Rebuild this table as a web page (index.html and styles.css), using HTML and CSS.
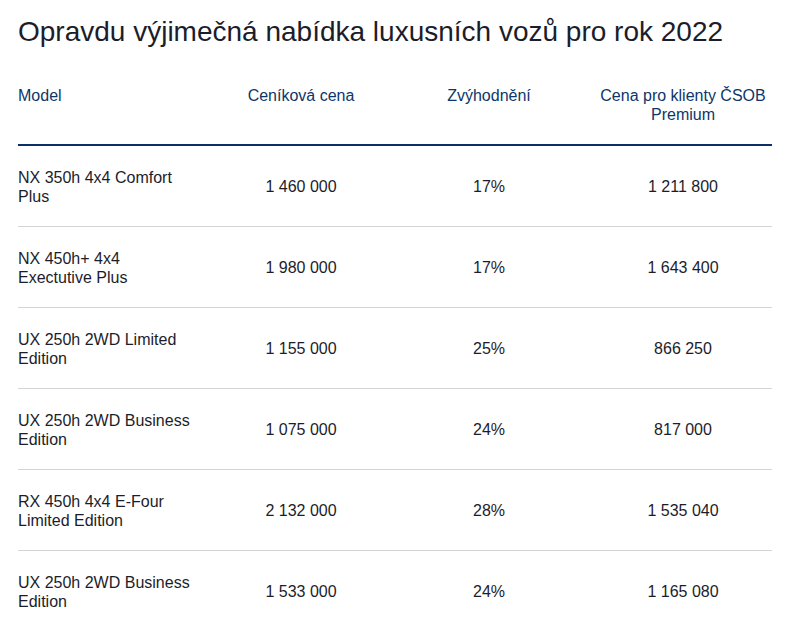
FILE: index.html
```html
<!DOCTYPE html>
<html lang="cs">
<head>
<meta charset="utf-8">
<title>Opravdu výjimečná nabídka luxusních vozů pro rok 2022</title>
<link rel="stylesheet" href="styles.css">
</head>
<body>
<main class="page">
  <h1 class="title">Opravdu výjimečná nabídka luxusních vozů pro rok 2022</h1>
  <div class="table">
    <div class="row head">
      <div class="cell model">Model</div>
      <div class="cell">Ceníková cena</div>
      <div class="cell">Zvýhodnění</div>
      <div class="cell last">Cena pro klienty ČSOB Premium</div>
    </div>
    <div class="row">
      <div class="cell model">NX 350h 4x4 Comfort Plus</div>
      <div class="cell">1 460 000</div>
      <div class="cell">17%</div>
      <div class="cell last">1 211 800</div>
    </div>
    <div class="row">
      <div class="cell model">NX 450h+ 4x4 Exectutive Plus</div>
      <div class="cell">1 980 000</div>
      <div class="cell">17%</div>
      <div class="cell last">1 643 400</div>
    </div>
    <div class="row">
      <div class="cell model">UX 250h 2WD Limited Edition</div>
      <div class="cell">1 155 000</div>
      <div class="cell">25%</div>
      <div class="cell last">866 250</div>
    </div>
    <div class="row">
      <div class="cell model">UX 250h 2WD Business Edition</div>
      <div class="cell">1 075 000</div>
      <div class="cell">24%</div>
      <div class="cell last">817 000</div>
    </div>
    <div class="row">
      <div class="cell model">RX 450h 4x4 E-Four Limited Edition</div>
      <div class="cell">2 132 000</div>
      <div class="cell">28%</div>
      <div class="cell last">1 535 040</div>
    </div>
    <div class="row">
      <div class="cell model">UX 250h 2WD Business Edition</div>
      <div class="cell">1 533 000</div>
      <div class="cell">24%</div>
      <div class="cell last">1 165 080</div>
    </div>
  </div>
</main>
</body>
</html>
```

FILE: styles.css
```css
html, body {
  margin: 0;
  padding: 0;
  background: #ffffff;
}

body {
  font-family: "Liberation Sans", Arial, Helvetica, sans-serif;
  color: #1c1d2b;
}

.page {
  padding: 16px 20px 0 18px;
}

.title {
  margin: 0 0 38px;
  font-size: 28px;
  line-height: 32px;
  font-weight: 400;
  color: #1c1d2b;
}

.table {
  display: flex;
  flex-direction: column;
  width: 754px;
}

.row {
  display: grid;
  grid-template-columns: 188px 190px 186px 190px;
  align-items: center;
  height: 80px;
  border-bottom: 1px solid #d4d4d4;
  font-size: 16px;
  line-height: 19px;
}

.row:last-child {
  border-bottom: none;
}

.row.head {
  align-items: start;
  height: 58px;
  border-bottom: 2px solid #0b2f66;
  color: #0d3669;
}

.cell {
  text-align: center;
}

.cell.model {
  text-align: left;
  padding-right: 12px;
}

.cell.last {
  padding-left: 12px;
}

.row:not(.head) .cell {
  padding-top: 1px;
}
```
